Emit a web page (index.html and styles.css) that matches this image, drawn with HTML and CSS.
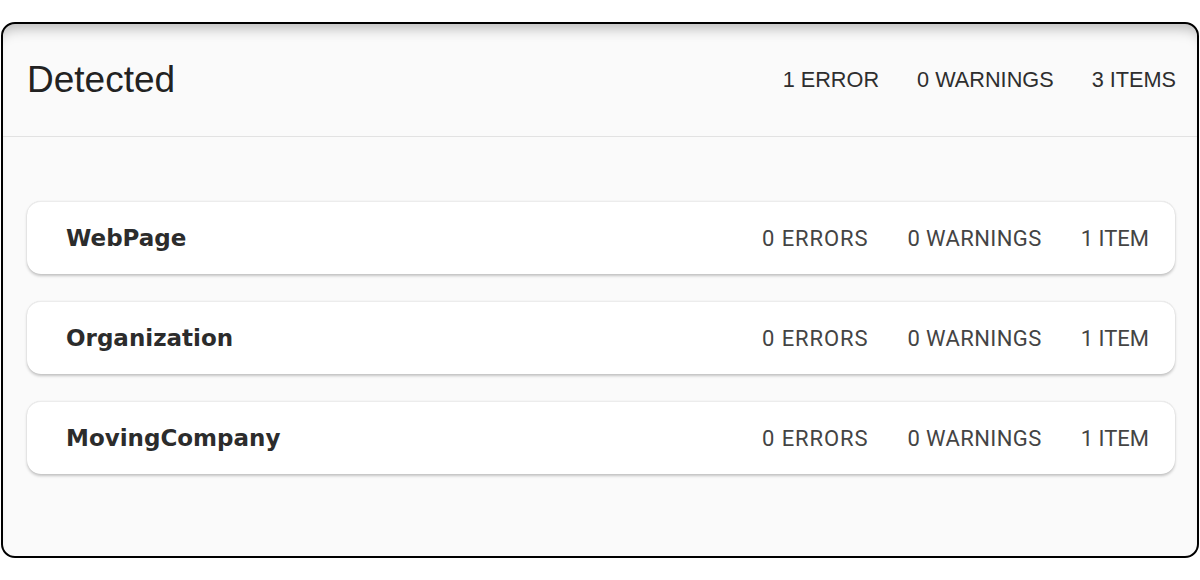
FILE: index.html
```html
<!DOCTYPE html>
<html>
<head>
<meta charset="utf-8">
<link rel="stylesheet" href="styles.css">
</head>
<body>
<div class="frame">
  <header class="head">
    <h1 class="title">Detected</h1>
    <div class="head-stats">
      <span>1 ERROR</span>
      <span>0 WARNINGS</span>
      <span>3 ITEMS</span>
    </div>
  </header>
  <main class="list">
    <div class="card">
      <div class="card-title">WebPage</div>
      <div class="card-stats"><span>0 ERRORS</span><span>0 WARNINGS</span><span>1 ITEM</span></div>
    </div>
    <div class="card">
      <div class="card-title">Organization</div>
      <div class="card-stats"><span>0 ERRORS</span><span>0 WARNINGS</span><span>1 ITEM</span></div>
    </div>
    <div class="card">
      <div class="card-title">MovingCompany</div>
      <div class="card-stats"><span>0 ERRORS</span><span>0 WARNINGS</span><span>1 ITEM</span></div>
    </div>
  </main>
</div>
</body>
</html>
```
FILE: styles.css
```css
html, body {
  margin: 0;
  padding: 0;
  background: #ffffff;
}
body {
  padding: 22px 1px 0 1px;
}
.frame {
  box-sizing: border-box;
  width: 1198px;
  height: 536px;
  border: 2px solid #000;
  border-radius: 14px;
  background: #fafafa;
  box-shadow: inset 0 14px 14px -10px rgba(0,0,0,0.28);
  overflow: hidden;
}
.head {
  box-sizing: border-box;
  height: 113px;
  display: flex;
  align-items: center;
  justify-content: space-between;
  padding: 0 21px 0 24px;
  border-bottom: 1px solid #e2e2e2;
}
.title {
  margin: 0;
  font-family: "Liberation Sans", Arial, sans-serif;
  font-weight: 400;
  font-size: 37px;
  color: #222;
}
.head-stats {
  display: flex;
  gap: 38px;
  font-family: "Liberation Sans", Arial, sans-serif;
  font-size: 21.7px;
  color: #2e2e2e;
}
.list {
  display: flex;
  flex-direction: column;
  gap: 27px;
  padding: 64px 22px 0 24px;
}
.card {
  height: 73px;
  box-sizing: border-box;
  display: flex;
  align-items: center;
  justify-content: space-between;
  padding: 0 26px 0 39px;
  background: #fff;
  border-radius: 14px;
  border-top: 1px solid #ececec;
  box-shadow: 0 2px 3px rgba(0,0,0,0.22), 0 0 1px rgba(0,0,0,0.12);
}
.card-title {
  font-family: "DejaVu Sans", Verdana, sans-serif;
  font-weight: 700;
  font-size: 23px;
  color: #2c2c2c;
}
.card-stats {
  display: flex;
  gap: 39px;
  font-family: Roboto, sans-serif;
  font-size: 22px;
  letter-spacing: 0.4px;
  color: #444;
}
.card-stats span:first-child {
  letter-spacing: 0.9px;
}
.card-stats span:last-child {
  letter-spacing: 0;
}
```
